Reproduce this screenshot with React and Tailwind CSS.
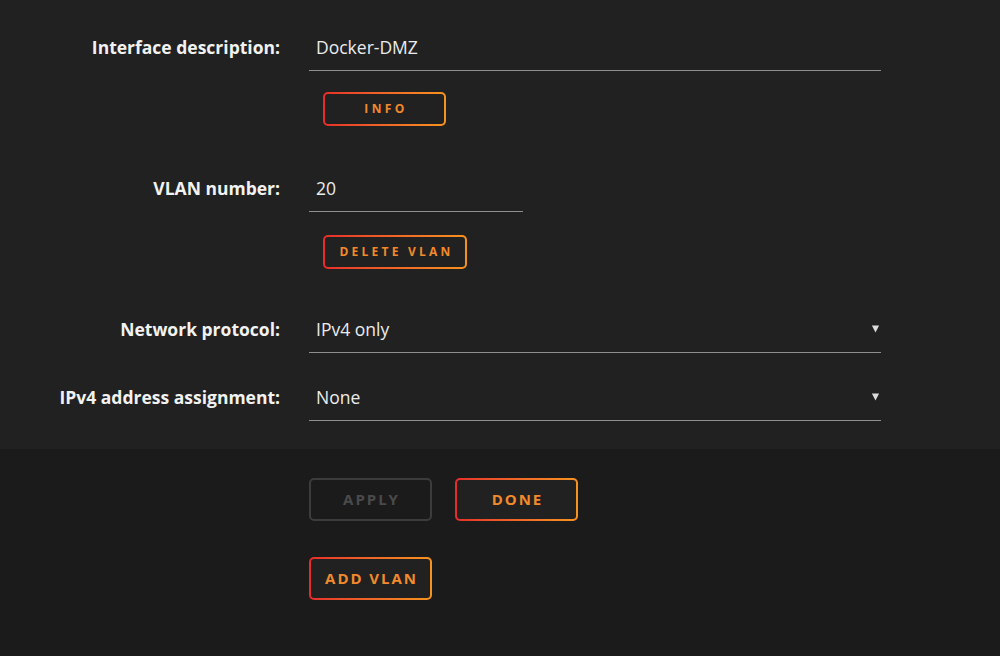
import React from "react";

function GradientButton({ children, className = "", textClass = "" }) {
  return (
    <div className={`rounded-[5px] bg-gradient-to-r from-[#e62b2a] to-[#f7931e] p-[2px] ${className}`}>
      <div className={`flex h-full w-full items-center justify-center rounded-[3px] bg-[#212121] font-bold text-[#f28a2c] ${textClass}`}>
        {children}
      </div>
    </div>
  );
}

function Caret() {
  return (
    <svg viewBox="0 0 10 10" className="h-[10px] w-[9px] text-[#dcdcdc]" aria-hidden="true">
      <path d="M1 1h8L5 9Z" fill="currentColor" />
    </svg>
  );
}

function Field({ label, value, width = "w-[572px]", select, className = "" }) {
  return (
    <div className={`flex items-center ${className}`}>
      <div className="w-[280px] text-right text-[17.5px] font-bold text-[#f2f2f2]">{label}</div>
      <div className={`ml-[29px] flex h-[47px] items-center justify-between border-b border-[#8f8f8f] pl-[7px] pr-[1px] ${width}`}>
        <span className="text-[17.5px] text-[#ececec]">{value}</span>
        {select && <Caret />}
      </div>
    </div>
  );
}

export default function App() {
  return (
    <div className="min-h-screen bg-[#1c1b1c] font-['Open_Sans',sans-serif]">
      <div className="bg-[#212121] pt-[24px] pb-[28px]">
        <Field label="Interface description:" value="Docker-DMZ" />
        <div className="ml-[323px] mt-[21px]">
          <GradientButton className="h-[34px] w-[123px]" textClass="text-[12px] tracking-[0.28em] pl-[3px]">
            INFO
          </GradientButton>
        </div>

        <Field label="VLAN number:" value="20" width="w-[214px]" className="mt-[39px]" />
        <div className="ml-[323px] mt-[23px]">
          <GradientButton className="h-[34px] w-[144px]" textClass="text-[12px] tracking-[0.27em] pl-[3px]">
            DELETE VLAN
          </GradientButton>
        </div>

        <Field label="Network protocol:" value="IPv4 only" select className="mt-[37px]" />
        <Field label="IPv4 address assignment:" value="None" select className="mt-[21px]" />
      </div>

      <div className="pl-[309px] pt-[29px]">
        <div className="flex gap-[23px]">
          <div className="flex h-[43px] w-[123px] items-center justify-center rounded-[5px] border-2 border-[#3c3c3d] pl-[2px] text-[15px] font-bold tracking-[0.13em] text-[#4a4a4b]">
            APPLY
          </div>
          <GradientButton className="h-[43px] w-[123px]" textClass="text-[15px] tracking-[0.13em] pl-[2px] bg-[#1c1b1c]">
            DONE
          </GradientButton>
        </div>
        <GradientButton className="mt-[36px] h-[43px] w-[123px]" textClass="text-[15px] tracking-[0.13em] pl-[2px] bg-[#1c1b1c]">
          ADD VLAN
        </GradientButton>
      </div>
    </div>
  );
}
